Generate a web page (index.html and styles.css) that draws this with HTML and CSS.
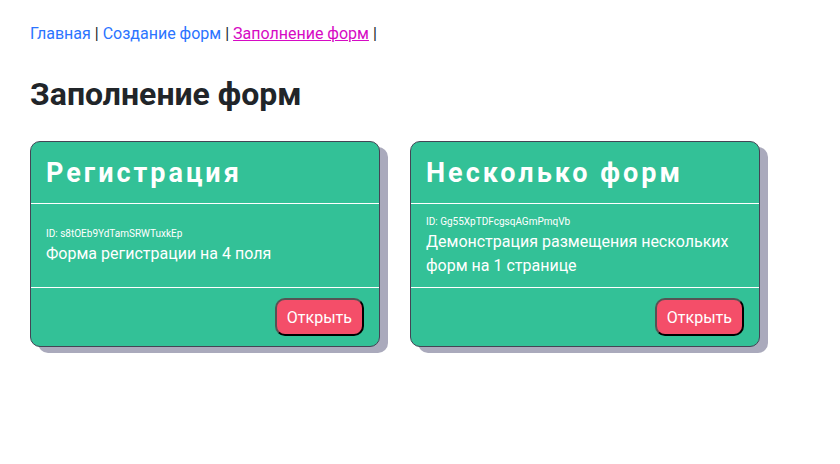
FILE: index.html
```html
<!DOCTYPE html>
<html lang="ru">
<head>
<meta charset="utf-8">
<meta name="viewport" content="width=device-width, initial-scale=1">
<title>Заполнение форм</title>
<link rel="stylesheet" href="styles.css">
</head>
<body>
<nav class="nav">
<a href="#">Главная</a> |
<a href="#">Создание форм</a> |
<a href="#" class="active">Заполнение форм</a> |
</nav>
<main>
<h1 class="title">Заполнение форм</h1>
<div class="cards">
<article class="card">
<h2 class="card-header">Регистрация</h2>
<div class="card-body">
<div class="card-id">ID: s8tOEb9YdTamSRWTuxkEp</div>
<div>Форма регистрации на 4 поля</div>
</div>
<div class="card-footer"><button class="open" type="button">Открыть</button></div>
</article>
<article class="card">
<h2 class="card-header">Несколько форм</h2>
<div class="card-body">
<div class="card-id">ID: Gg55XpTDFcgsqAGmPmqVb</div>
<div>Демонстрация размещения нескольких форм на 1 странице</div>
</div>
<div class="card-footer"><button class="open" type="button">Открыть</button></div>
</article>
</div>
</main>
</body>
</html>
```
FILE: styles.css
```css
* {
  box-sizing: border-box;
}

body {
  margin: 0;
  padding: 22px 30px;
  font: 16px/24px Roboto, sans-serif;
  color: #212529;
  background: #fff;
}

.nav a {
  color: #2b74ff;
  text-decoration: none;
}

.nav a.active {
  color: #d60ac4;
  text-decoration: underline;
}

.title {
  margin: 29px 0 28px;
  font-size: 32px;
  line-height: 38px;
  font-weight: 700;
}

.cards {
  display: grid;
  grid-template-columns: repeat(auto-fill, 350px);
  gap: 30px;
}

.card {
  display: flex;
  flex-direction: column;
  color: #fff;
  background: #33c197;
  border: 1px solid #445;
  border-radius: 10px;
  box-shadow: 8px 6px 0 #aaaabc;
}

.card-header {
  margin: 0;
  padding: 16px 15px 14px;
  font-size: 27px;
  line-height: 31px;
  font-weight: 700;
  letter-spacing: 3px;
  border-bottom: 1px solid #fff;
}

.card-body {
  flex: 1;
  display: flex;
  flex-direction: column;
  justify-content: center;
  padding: 10px 15px 9px;
}

.card-id {
  font-size: 10px;
  line-height: 16px;
}

.card-footer {
  display: flex;
  justify-content: flex-end;
  padding: 10px 15px;
  border-top: 1px solid #fff;
}

.open {
  padding: 6px 10px 4px;
  font: inherit;
  color: #fff;
  background: #f44e69;
  border: 2px outset #000;
  border-radius: 10px;
}
```
